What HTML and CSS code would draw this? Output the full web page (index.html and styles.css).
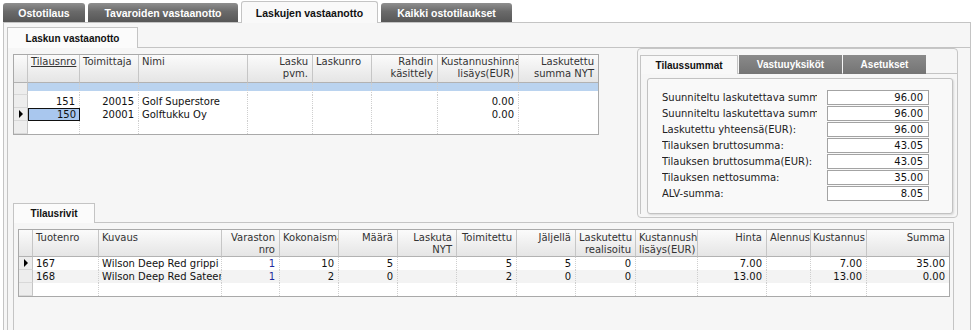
FILE: index.html
```html
<!DOCTYPE html>
<html lang="fi">
<head>
<meta charset="utf-8">
<title>Laskujen vastaanotto</title>
<link rel="stylesheet" href="styles.css">
</head>
<body>
<div class="tabs">
  <div class="tab tab-1">Ostotilaus</div>
  <div class="tab tab-2">Tavaroiden vastaanotto</div>
  <div class="tab tab-3 tab-active">Laskujen vastaanotto</div>
  <div class="tab tab-4">Kaikki ostotilaukset</div>
</div>
<div class="main">
  <div class="subtab">Laskun vastaanotto</div>
  <div class="subpanel">
    <div class="left-col">
      <div class="grid grid-upper">
        <div class="row head">
          <div class="c rh-head"></div>
          <div class="c"><span class="sorted">Tilausnro</span></div>
          <div class="c">Toimittaja</div>
          <div class="c">Nimi</div>
          <div class="c r">Lasku<br>pvm.</div>
          <div class="c">Laskunro</div>
          <div class="c r">Rahdin<br>käsittely</div>
          <div class="c r">Kustannushinnan<br>lisäys(EUR)</div>
          <div class="c r">Laskutettu<br>summa NYT</div>
        </div>
        <div class="row row-new">
          <div class="c rh"></div>
          <div class="c"></div><div class="c"></div><div class="c"></div><div class="c"></div>
          <div class="c"></div><div class="c"></div><div class="c"></div><div class="c"></div>
        </div>
        <div class="row">
          <div class="c rh"></div>
          <div class="c r">151</div>
          <div class="c r">20015</div>
          <div class="c">Golf Superstore</div>
          <div class="c"></div>
          <div class="c"></div>
          <div class="c"></div>
          <div class="c r">0.00</div>
          <div class="c"></div>
        </div>
        <div class="row">
          <div class="c rh ptr"></div>
          <div class="c r sel">150</div>
          <div class="c r">20001</div>
          <div class="c">Golftukku Oy</div>
          <div class="c"></div>
          <div class="c"></div>
          <div class="c"></div>
          <div class="c r">0.00</div>
          <div class="c"></div>
        </div>
        <div class="row">
          <div class="c rh"></div>
          <div class="c"></div><div class="c"></div><div class="c"></div><div class="c"></div>
          <div class="c"></div><div class="c"></div><div class="c"></div><div class="c"></div>
        </div>
      </div>
      <div class="subtab subtab-rows">Tilausrivit</div>
    </div>

    <div class="groupbox">
      <div class="gb-tabs">
        <div class="gb-tab gb-tab-active gb-tab-1">Tilaussummat</div>
        <div class="gb-tab gb-tab-2">Vastuuyksiköt</div>
        <div class="gb-tab gb-tab-3">Asetukset</div>
      </div>
      <div class="gb-page">
        <div class="summary">
          <div class="sum-row"><div class="sum-label">Suunniteltu laskutettava summa:</div><div class="sum-value">96.00</div></div>
          <div class="sum-row"><div class="sum-label">Suunniteltu laskutettava summa(EUR):</div><div class="sum-value">96.00</div></div>
          <div class="sum-row"><div class="sum-label">Laskutettu yhteensä(EUR):</div><div class="sum-value">96.00</div></div>
          <div class="sum-row"><div class="sum-label">Tilauksen bruttosumma:</div><div class="sum-value">43.05</div></div>
          <div class="sum-row"><div class="sum-label">Tilauksen bruttosumma(EUR):</div><div class="sum-value">43.05</div></div>
          <div class="sum-row"><div class="sum-label">Tilauksen nettosumma:</div><div class="sum-value">35.00</div></div>
          <div class="sum-row"><div class="sum-label">ALV-summa:</div><div class="sum-value">8.05</div></div>
        </div>
      </div>
    </div>

    <div class="lower-panel">
      <div class="grid grid-lower">
        <div class="row head">
          <div class="c rh-head"></div>
          <div class="c">Tuotenro</div>
          <div class="c">Kuvaus</div>
          <div class="c r">Varaston<br>nro</div>
          <div class="c r">Kokonaismäärä</div>
          <div class="c r">Määrä</div>
          <div class="c r">Laskuta<br>NYT</div>
          <div class="c r">Toimitettu</div>
          <div class="c r">Jäljellä</div>
          <div class="c r">Laskutettu<br>realisoitu</div>
          <div class="c r">Kustannush<br>lisäys(EUR)</div>
          <div class="c r">Hinta</div>
          <div class="c r">Alennus</div>
          <div class="c tight">Kustannus</div>
          <div class="c r">Summa</div>
        </div>
        <div class="row">
          <div class="c rh ptr"></div>
          <div class="c">167</div>
          <div class="c">Wilson Deep Red grippi</div>
          <div class="c r blue">1</div>
          <div class="c r">10</div>
          <div class="c r">5</div>
          <div class="c r"></div>
          <div class="c r">5</div>
          <div class="c r">5</div>
          <div class="c r">0</div>
          <div class="c r"></div>
          <div class="c r">7.00</div>
          <div class="c r"></div>
          <div class="c r">7.00</div>
          <div class="c r">35.00</div>
        </div>
        <div class="row alt">
          <div class="c rh"></div>
          <div class="c">168</div>
          <div class="c">Wilson Deep Red Sateenvarjo</div>
          <div class="c r blue">1</div>
          <div class="c r">2</div>
          <div class="c r">0</div>
          <div class="c r"></div>
          <div class="c r">2</div>
          <div class="c r">0</div>
          <div class="c r">0</div>
          <div class="c r"></div>
          <div class="c r">13.00</div>
          <div class="c r"></div>
          <div class="c r">13.00</div>
          <div class="c r">0.00</div>
        </div>
        <div class="row">
          <div class="c rh"></div>
          <div class="c"></div><div class="c"></div><div class="c"></div><div class="c"></div>
          <div class="c"></div><div class="c"></div><div class="c"></div><div class="c"></div>
          <div class="c"></div><div class="c"></div><div class="c"></div><div class="c"></div>
          <div class="c"></div><div class="c"></div>
        </div>
      </div>
    </div>
  </div>
</div>
</body>
</html>
```

FILE: styles.css
```css
* { box-sizing: border-box; }

body {
  margin: 0;
  width: 980px;
  height: 330px;
  overflow: hidden;
  background: #fff;
  font-family: "DejaVu Sans", Verdana, sans-serif;
  font-size: 10px;
  color: #111;
}

/* top tabs */
.tabs {
  display: flex;
  align-items: flex-end;
  gap: 3px;
  height: 22px;
  padding-left: 3px;
}
.tab {
  height: 19px;
  border-radius: 3px 3px 0 0;
  display: flex;
  align-items: center;
  justify-content: center;
  font: bold 10.5px "Liberation Sans", Arial, sans-serif;
  color: #fff;
  background: linear-gradient(#8f8f8f, #6a6a6a 45%, #575757);
}
.tab-1 { width: 82px; }
.tab-2 { width: 150px; }
.tab-3 { width: 137px; }
.tab-4 { width: 131px; }
.tab-active {
  height: 22px;
  margin-bottom: -1px;
  position: relative;
  z-index: 1;
  color: #111;
  background: #f9f9f9;
  border: 1px solid #c4c4c4;
  border-bottom: none;
}

/* main panel */
.main {
  margin-left: 3px;
  width: 968px;
  height: 312px;
  border: 1px solid #c4c4c4;
  background: #f6f6f6;
  padding: 4px 0 0 3px;
}

.subtab {
  width: 131px;
  height: 21px;
  margin-bottom: -1px;
  position: relative;
  z-index: 1;
  display: flex;
  align-items: center;
  justify-content: center;
  font: bold 10px "Liberation Sans", Arial, sans-serif;
  color: #111;
  background: #fbfbfb;
  border: 1px solid #c4c4c4;
  border-bottom: none;
}
.subtab-rows {
  width: 82px;
  height: 20px;
  margin-bottom: 0;
}

.subpanel {
  width: 963px;
  height: 290px;
  border-top: 1px solid #c4c4c4;
  border-left: 1px solid #c4c4c4;
  padding: 0 12px 0 5px;
  display: grid;
  grid-template-columns: 586px 321px;
  grid-template-rows: auto 1fr;
  column-gap: 38px;
}

.left-col {
  height: 175px;
  padding-top: 6px;
  display: flex;
  flex-direction: column;
  justify-content: space-between;
}

/* grids */
.grid {
  border: 1px solid #a9a9a9;
  background: #fff;
}
.grid-upper { width: 586px; }
.grid-lower { width: 932px; }

.row { display: grid; }
.grid-upper .row { grid-template-columns: 14px 52px 59px 109px 65px 59px 66px 81px 79px; }
.grid-lower .row { grid-template-columns: 14px 66px 123px 58px 59px 59px 59px 60px 59px 60px 62px 69px 44px 56px 82px; }

.c {
  height: 13px;
  line-height: 13px;
  padding: 0 4px 0 3px;
  white-space: nowrap;
  overflow: hidden;
  border-right: 1px dotted #cfcfcf;
}
.c:last-child { border-right: none; }
.r { text-align: right; }

.head .c {
  height: 28px;
  line-height: 12px;
  padding-top: 1px;
  color: #333;
  background: linear-gradient(#fbfbfb, #e5e5e5);
  border-right: 1px solid #c6c6c6;
  border-bottom: 1px solid #b2b2b2;
}
.grid-lower .head .c {
  height: 27px;
  padding-top: 2px;
}
.head .c:last-child { border-right: none; }
.head .tight { padding: 2px 0 0 2px; }
.sorted { text-decoration: underline; }

.rh {
  padding: 0;
  background: #ededed;
  border-right: 1px solid #c4c4c4;
  border-bottom: 1px solid #d8d8d8;
  display: flex;
  align-items: center;
  justify-content: center;
}
.ptr::before {
  content: "";
  border-left: 4px solid #000;
  border-top: 4px solid transparent;
  border-bottom: 4px solid transparent;
}

.row-new .c {
  height: 12px;
  background: linear-gradient(#bad3ef 8px, #fff 8px);
}
.row-new .rh { background: #ededed; }

.sel {
  background: #a9c7ee;
  border: 1px solid #111;
  line-height: 11px;
  padding-right: 3px;
}

.alt .c { background: #f3f3f3; }
.alt .rh { background: #ededed; }
.blue { color: #1f2a9c; }

/* right group box */
.groupbox {
  height: 170px;
  border: 1px solid #c6c6c6;
  border-radius: 4px;
  background: #f6f6f6;
  padding: 6px 0 0 2px;
}
.gb-tabs {
  display: flex;
  gap: 1px;
  height: 19px;
}
.gb-tab {
  display: flex;
  align-items: center;
  justify-content: center;
  font: bold 10px "Liberation Sans", Arial, sans-serif;
  color: #fff;
  background: linear-gradient(#8a8a8a, #747474);
}
.gb-tab-1 { width: 98px; }
.gb-tab-2 { width: 103px; }
.gb-tab-3 { width: 83px; }
.gb-tab-active {
  position: relative;
  z-index: 1;
  color: #111;
  background: #f8f8f8;
  border: 1px solid #c4c4c4;
  border-bottom: none;
}
.gb-page {
  margin-top: -1px;
  border-top: 1px solid #c4c4c4;
  border-left: 1px solid #c4c4c4;
  padding: 4px 4px 0 6px;
}
.summary {
  width: 306px;
  height: 136px;
  border: 1px solid #c2c2c2;
  border-radius: 3px;
  background: #f9f9f9;
  box-shadow: 1px 1px 2px rgba(0, 0, 0, 0.12);
  padding: 11px 0 0 14px;
}
.sum-row {
  display: flex;
  height: 16px;
}
.sum-label {
  width: 155px;
  margin-right: 10px;
  line-height: 15px;
  white-space: nowrap;
  overflow: hidden;
  color: #222;
}
.sum-value {
  width: 102px;
  height: 15px;
  line-height: 13px;
  border: 1px solid #a3a3a3;
  background: #fff;
  text-align: right;
  padding-right: 5px;
}

/* lower panel */
.lower-panel {
  grid-column: 1 / -1;
  margin-top: -1px;
  margin-right: 4px;
  height: 120px;
  border: 1px solid #c4c4c4;
  border-bottom: none;
  background: #f6f6f6;
  padding: 6px 0 0 4px;
}
```
